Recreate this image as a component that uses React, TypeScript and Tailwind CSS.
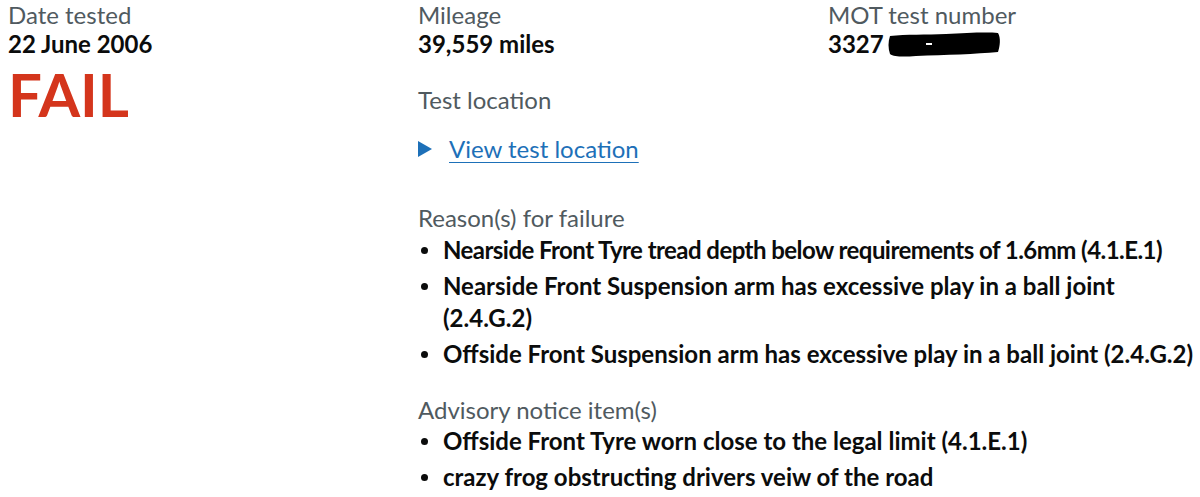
import React from "react";

const Bullet = ({ children, tight }: { children: React.ReactNode; tight?: boolean }) => (
  <li className="flex items-start mb-[4px]">
    <span className="w-[25px] shrink-0 flex items-center h-[32px] pl-[3px]">
      <span className="block w-[7px] h-[7px] rounded-full bg-[#0b0c0c]" />
    </span>
    <span className={tight ? "font-bold leading-[32px] tracking-[-0.55px]" : "font-bold leading-[32px]"}>{children}</span>
  </li>
);

export default function App() {
  return (
    <div
      className="w-[1200px] h-[497px] bg-white overflow-hidden text-[#0b0c0c] text-[24px]"
      style={{ fontFamily: "Lato, 'Noto Sans', sans-serif" }}
    >
      <div className="flex pl-[8px]">
        <div className="w-[410px] shrink-0">
          <div className="text-[#505a5f] leading-[29px]">Date tested</div>
          <div className="font-bold leading-[30px]">22 June 2006</div>
          <div className="font-bold text-[#d4351c] text-[60px] leading-[66px] mt-[2px]">FAIL</div>
        </div>
        <div className="w-[410px] shrink-0">
          <div className="text-[#505a5f] leading-[29px]">Mileage</div>
          <div className="font-bold leading-[30px]">39,559 miles</div>
          <div className="text-[#505a5f] leading-[30px] mt-[26px]">Test location</div>
          <div className="flex items-center mt-[19px] h-[30px]">
            <svg width="14" height="16" viewBox="0 0 14 16" className="mr-[17px]">
              <polygon points="0,0 14,8 0,16" fill="#1d70b8" />
            </svg>
            <span className="text-[#1d70b8] underline underline-offset-[4px] decoration-[1px]">View test location</span>
          </div>
          <div className="text-[#505a5f] leading-[30px] mt-[39px]">Reason(s) for failure</div>
          <ul className="w-[790px] mt-[1px]">
            <Bullet tight>Nearside Front Tyre tread depth below requirements of 1.6mm (4.1.E.1)</Bullet>
            <Bullet>
              Nearside Front Suspension arm has excessive play in a ball joint
              <br />
              (2.4.G.2)
            </Bullet>
            <Bullet>Offside Front Suspension arm has excessive play in a ball joint (2.4.G.2)</Bullet>
          </ul>
          <div className="text-[#505a5f] leading-[30px] mt-[25px]">Advisory notice item(s)</div>
          <ul className="w-[790px]">
            <Bullet>Offside Front Tyre worn close to the legal limit (4.1.E.1)</Bullet>
            <Bullet>crazy frog obstructing drivers veiw of the road</Bullet>
          </ul>
        </div>
        <div className="w-[370px] shrink-0">
          <div className="text-[#505a5f] leading-[29px]">MOT test number</div>
          <div className="font-bold leading-[30px] flex items-center">
            <span>3327</span>
            <svg width="116" height="28" viewBox="0 0 116 28" className="ml-[2px]">
              <path
                d="M4 6 C20 4 40 5 60 4 C80 3 100 2 112 3 C115 8 114 16 112 22 C90 24 60 25 30 26 C18 27 8 27 4 24 C2 18 2 12 4 6 Z"
                fill="#000"
              />
              <rect x="40" y="13" width="6" height="2" fill="#fff" />
            </svg>
          </div>
        </div>
      </div>
    </div>
  );
}
